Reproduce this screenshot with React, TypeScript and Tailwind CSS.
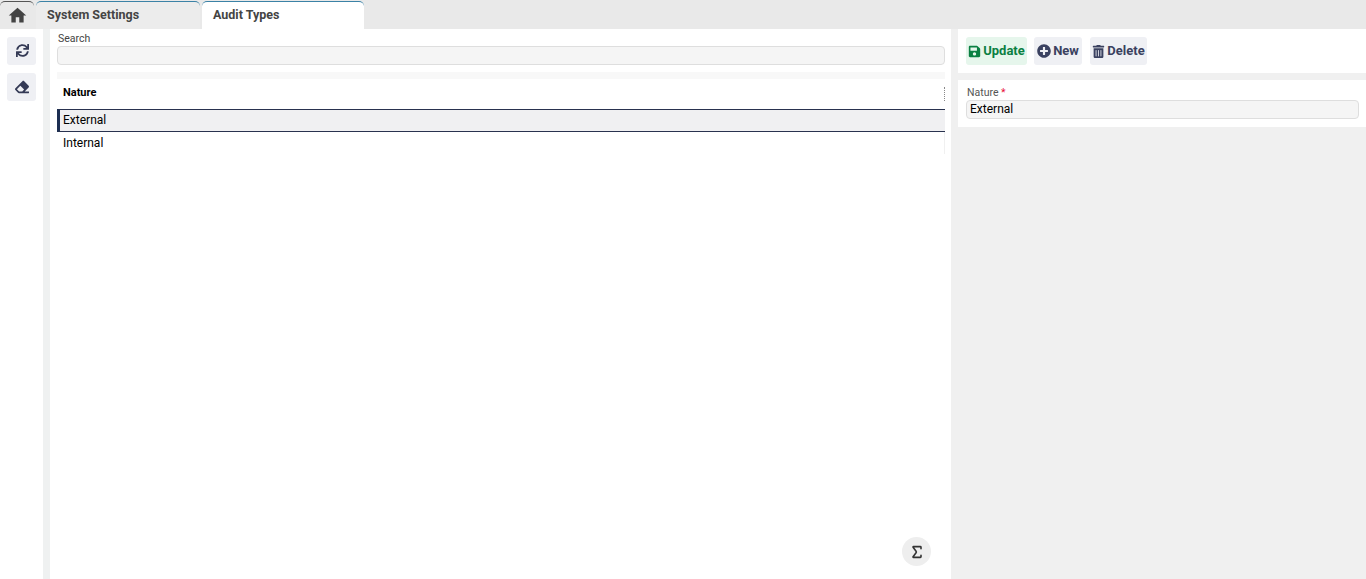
import { FaSync, FaEraser, FaSave, FaPlusCircle, FaTrashAlt } from 'react-icons/fa'
import { MdHome } from 'react-icons/md'
import { Sigma } from 'lucide-react'

function Tab({ label, active, width }: { label: string; active?: boolean; width: string }) {
  return (
    <div className={`${width} ${active ? 'bg-white' : 'bg-[#ececec]'} h-[28px] mt-px rounded-t-[5px] border-t border-[#3b82a6] pl-[11px] flex items-center text-[12.5px] font-bold text-[#444]`}>
      {label}
    </div>
  )
}

function ActionButton({ icon, label, color, bg, width }: { icon: React.ReactNode; label: string; color: string; bg: string; width: string }) {
  return (
    <button className={`${width} h-[28px] flex items-center justify-center gap-[2px] rounded-[3px] text-[13px] font-bold ${color} ${bg}`}>
      {icon}
      {label}
    </button>
  )
}

export default function App() {
  return (
    <div className="h-[579px] w-[1366px] overflow-hidden flex flex-col bg-[#f0f0f0] font-['Roboto',sans-serif]">
      <div className="h-[29px] shrink-0 bg-[#e9e9e9] flex items-start gap-[2px]">
        <div className="w-[34px] h-[28px] mt-px pl-px pb-px rounded-t-[5px] border-t border-[#555] flex items-center justify-center text-[#444]">
          <MdHome size={21} />
        </div>
        <Tab label="System Settings" width="w-[164px]" />
        <Tab label="Audit Types" active width="w-[162px]" />
      </div>
      <div className="flex-1 flex min-h-0">
        <div className="w-[43px] shrink-0 bg-white pt-[8px] pl-[7px] flex flex-col gap-[8px]">
          <button className="w-[29px] h-[28px] pb-[2px] pl-px rounded-[3px] bg-[#eff0f4] flex items-center justify-center text-[#343a55]">
            <FaSync size={13} />
          </button>
          <button className="w-[29px] h-[28px] rounded-[3px] bg-[#eff0f4] flex items-center justify-center text-[#343a55]">
            <FaEraser size={14} />
          </button>
        </div>
        <div className="w-[7px] shrink-0 bg-[#eff1f1]" />
        <div className="w-[901px] shrink-0 bg-white pl-[7px] pr-[6px] relative">
          <div className="text-[10.5px] leading-[12px] text-[#444] pt-[4px] pl-px">Search</div>
          <div className="h-[19px] mt-px rounded-[4px] border border-[#dedede] bg-[#f5f5f5]" />
          <div className="h-[7px] mt-[7px] bg-[#f8f8f8]" />
          <div className="h-[30px] pb-[2px] flex items-center justify-between pl-[6px]">
            <span className="text-[11px] font-bold text-black">Nature</span>
            <span className="mt-[2px] w-px h-[14px] border-l border-dotted border-[#888]" />
          </div>
          <div className="h-[23px] pb-[2px] bg-[#f0f0f2] border-y border-[#29324f] border-l-[3px] border-l-[#1d2f52] pl-[3px] flex items-center text-[12px] text-black">
            External
          </div>
          <div className="h-[22px] pl-[6px] flex items-center text-[12px] text-black border-r border-[#f0f0f0]">
            Internal
          </div>
          <button className="absolute right-[20px] bottom-[13px] w-[29px] h-[29px] rounded-full bg-[#eeeeee] flex items-center justify-center text-[#333]">
            <Sigma size={16} strokeWidth={2.4} />
          </button>
        </div>
        <div className="w-[7px] shrink-0 bg-[#f0f0f0]" />
        <div className="flex-1 min-w-0 flex flex-col">
          <div className="h-[44px] bg-white pl-[8px] pt-[8px] flex gap-[7px]">
            <ActionButton icon={<FaSave size={13} />} label="Update" color="text-[#0b8043]" bg="bg-[#e6f6ec]" width="w-[61px]" />
            <ActionButton icon={<FaPlusCircle size={14} />} label="New" color="text-[#3a4160]" bg="bg-[#eff0f4]" width="w-[48px]" />
            <ActionButton icon={<FaTrashAlt size={13} />} label="Delete" color="text-[#3a4160]" bg="bg-[#eff0f4] ml-px" width="w-[57px]" />
          </div>
          <div className="h-[47px] mt-[7px] bg-white pl-[8px] pr-[7px]">
            <div className="text-[10.5px] leading-[12px] pt-[7px] pl-px text-[#555]">
              Nature <span className="text-[#e8103a]">*</span>
            </div>
            <div className="h-[19px] pb-[2px] mt-px rounded-[4px] border border-[#dedede] bg-[#f5f5f5] pl-[3px] flex items-center text-[12px] text-black">
              External
            </div>
          </div>
        </div>
      </div>
    </div>
  )
}
